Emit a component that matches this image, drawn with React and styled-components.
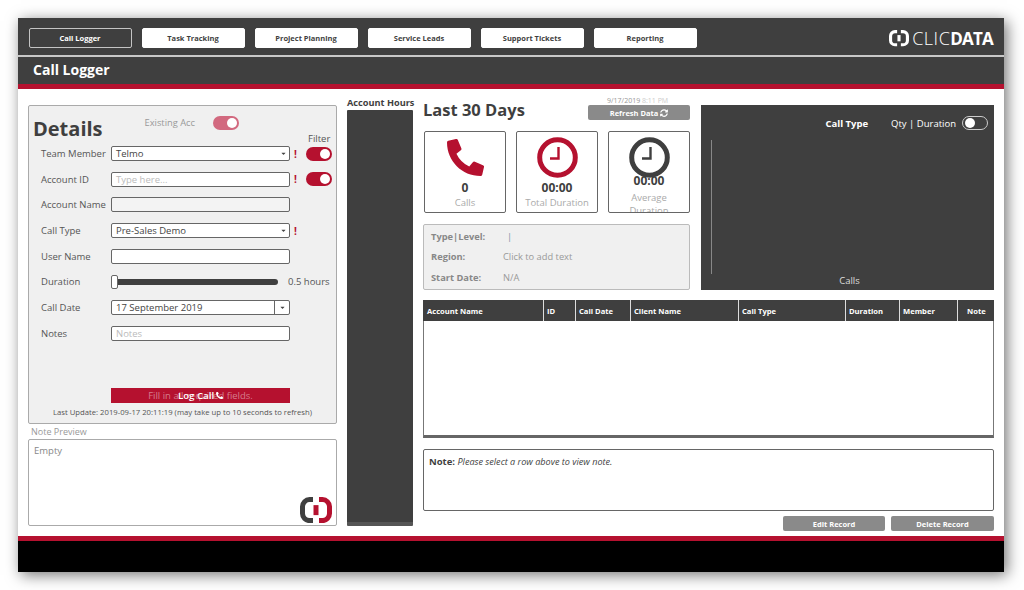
import React from 'react';
import styled, { createGlobalStyle } from 'styled-components';
import { FaPhoneAlt, FaSyncAlt, FaCaretDown } from 'react-icons/fa';

const dark = '#3f3f3f';
const red = '#b5112f';

const GlobalStyle = createGlobalStyle`
  html, body {
    margin: 0;
    background: #fff;
    font-family: "Open Sans", "Liberation Sans", sans-serif;
    color: ${dark};
  }
  * { box-sizing: border-box; }
`;

const Frame = styled.div`
  width: 986px;
  height: 554px;
  margin: 18px;
  display: flex;
  flex-direction: column;
  background: #fff;
  box-shadow: 3px 3px 14px rgba(0, 0, 0, 0.55);
`;

const TopNav = styled.div`
  height: 37px;
  flex: none;
  background: ${dark};
  display: flex;
  align-items: flex-start;
  gap: 10px;
  padding: 10px 11px 0 10.5px;
`;

const NavButton = styled.div`
  width: 103px;
  height: 20px;
  border-radius: 2px;
  font-size: 7.5px;
  font-weight: 700;
  display: flex;
  align-items: center;
  justify-content: center;
  background: ${(p) => (p.$active ? dark : '#fff')};
  color: ${(p) => (p.$active ? '#fff' : dark)};
  border: 1px solid ${(p) => (p.$active ? '#c4c4c4' : '#fff')};
`;

const Logo = styled.div`
  margin-left: auto;
  margin-top: 2px;
  display: flex;
  align-items: center;
  gap: 3px;
  color: #fff;
  font-size: 18px;
  line-height: 16px;
`;

const LogoThin = styled.span`
  font-weight: 300;
  letter-spacing: 0.5px;
`;

const LogoBold = styled.span`
  font-size: 17px;
  font-weight: 700;
  letter-spacing: -0.8px;
`;

const TitleBar = styled.div`
  height: 34px;
  flex: none;
  background: ${dark};
  border-top: 2px solid #c8c8c8;
  border-bottom: 5px solid ${red};
  padding: 0 0 2px 15px;
  display: flex;
  align-items: center;
  color: #fff;
  font-size: 14px;
  font-weight: 700;
`;

const Content = styled.div`
  flex: 1;
  display: flex;
  align-items: flex-start;
  gap: 10px;
  padding: 7px 10px 5px;
  min-height: 0;
`;

const LeftCol = styled.div`
  width: 309px;
  margin-top: 9px;
  display: flex;
  flex-direction: column;
`;

const DetailsPanel = styled.div`
  position: relative;
  height: 319px;
  background: #f0f0f0;
  border: 1px solid #aaa;
  border-radius: 2px;
  display: flex;
  flex-direction: column;
  padding: 0 4px 5px 12px;
`;

const DetailsHead = styled.div`
  height: 40px;
  margin-left: -8px;
  display: flex;
  align-items: flex-start;
`;

const DetailsTitle = styled.h2`
  margin: 9px 0 0;
  font-size: 20px;
  line-height: 27px;
  font-weight: 700;
  color: ${dark};
`;

const ExistingLabel = styled.span`
  margin: 10px 0 0 42px;
  font-size: 9.3px;
  line-height: 14px;
  color: #999;
`;

const FilterLabel = styled.span`
  position: absolute;
  left: 279px;
  top: 26px;
  font-size: 9.5px;
  line-height: 14px;
  color: #555;
`;

const Toggle = styled.div`
  width: 26px;
  height: 14px;
  flex: none;
  border-radius: 7px;
  padding: 2px;
  display: flex;
  justify-content: ${(p) => (p.$on ? 'flex-end' : 'flex-start')};
  background: ${(p) => p.$bg || red};
  border: ${(p) => (p.$outline ? '1px solid #ccc' : 'none')};
  align-items: center;
`;

const Knob = styled.div`
  width: 10px;
  height: 10px;
  border-radius: 50%;
  background: #fff;
`;

const ExistingToggle = styled(Toggle)`
  margin: 10px 0 0 18px;
`;

const Rows = styled.div`
  display: flex;
  flex-direction: column;
  gap: 10.7px;
`;

const Row = styled.div`
  height: 15px;
  display: flex;
  align-items: center;
`;

const RowLabel = styled.label`
  width: 70px;
  flex: none;
  font-size: 9.5px;
  color: #555;
`;

const Field = styled.div`
  width: 179px;
  height: 15px;
  flex: none;
  background: ${(p) => (p.$muted ? '#f3f3f3' : '#fff')};
  border: 1px solid #666;
  border-radius: 2px;
  display: flex;
  align-items: center;
  padding-left: 4px;
  font-size: 9.5px;
  color: ${(p) => (p.$placeholder ? '#bbb' : '#444')};
`;

const Caret = styled(FaCaretDown)`
  margin-left: auto;
  margin-right: 2px;
  width: 7px;
  height: 7px;
  color: #444;
`;

const DateCaret = styled.div`
  margin-left: auto;
  width: 15px;
  height: 100%;
  border-left: 1px solid #666;
  display: flex;
  align-items: center;
  justify-content: center;
  & > svg {
    margin: 0;
  }
`;

const Flag = styled.span`
  width: 16px;
  flex: none;
  padding-left: 4px;
  font-size: 10px;
  font-weight: 700;
  color: ${red};
`;

const Slider = styled.div`
  position: relative;
  width: 167px;
  height: 6px;
  flex: none;
  background: ${dark};
  border-radius: 3px;
`;

const SliderThumb = styled.div`
  position: absolute;
  left: 0;
  top: -4px;
  width: 7px;
  height: 14px;
  background: #fff;
  border: 1px solid #666;
  border-radius: 2px;
`;

const SliderValue = styled.span`
  margin-left: 10px;
  font-size: 9.5px;
  color: #555;
`;

const SubmitWrap = styled.div`
  position: relative;
  margin: auto 0 0 70px;
  width: 179px;
  height: 15px;
  background: ${red};
  display: flex;
  align-items: center;
  justify-content: center;
  gap: 2px;
  color: #fff;
  font-size: 9.7px;
  font-weight: 600;
`;

const SubmitHint = styled.span`
  position: absolute;
  inset: 0;
  display: flex;
  align-items: center;
  justify-content: center;
  font-size: 9.5px;
  font-weight: 400;
  color: rgba(255, 255, 255, 0.45);
`;

const LastUpdate = styled.div`
  margin: 3px 0 0 -12px;
  width: 307px;
  text-align: center;
  font-size: 7.7px;
  line-height: 12px;
  color: #555;
`;

const PreviewLabel = styled.div`
  margin: 1px 0 0 3px;
  height: 14px;
  font-size: 9px;
  line-height: 14px;
  color: #999;
`;

const PreviewBox = styled.div`
  position: relative;
  height: 87px;
  background: #fff;
  border: 1px solid #aaa;
  border-radius: 2px;
  padding: 4px 5px;
  font-size: 9.5px;
  color: #888;
`;

const PreviewLogo = styled.div`
  position: absolute;
  right: 4px;
  bottom: 2px;
  line-height: 0;
`;

const HoursCol = styled.div`
  width: 66px;
  display: flex;
  flex-direction: column;
`;

const HoursLabel = styled.div`
  height: 14px;
  white-space: nowrap;
  font-size: 9.2px;
  line-height: 14px;
  font-weight: 700;
  color: ${dark};
`;

const HoursBar = styled.div`
  height: 416px;
  background: ${dark};
  border-bottom: 4px solid #555;
  border-radius: 1px;
`;

const RightCol = styled.div`
  width: 571px;
  display: flex;
  flex-direction: column;
`;

const TopRow = styled.div`
  display: flex;
  gap: 11px;
  height: 194px;
`;

const Summary = styled.div`
  width: 267px;
  display: flex;
  flex-direction: column;
`;

const SummaryHead = styled.div`
  height: 35px;
  display: flex;
  justify-content: space-between;
`;

const SummaryTitle = styled.h2`
  margin: 2px 0 0;
  font-size: 16.5px;
  line-height: 23px;
  font-weight: 700;
  color: ${dark};
`;

const RefreshStack = styled.div`
  width: 102px;
  display: flex;
  flex-direction: column;
`;

const StampText = styled.div`
  height: 9px;
  padding-left: 19px;
  font-size: 7px;
  line-height: 9px;
  color: #999;
  white-space: nowrap;
`;

const StampTime = styled.span`
  color: #ccc;
`;

const GreyButton = styled.div`
  width: ${(p) => p.$width || '102px'};
  height: 15px;
  background: #8a8a8a;
  border-radius: 2px;
  display: flex;
  align-items: center;
  justify-content: center;
  gap: 2px;
  font-size: 7.5px;
  font-weight: 700;
  color: #fff;
`;

const Cards = styled.div`
  display: flex;
  justify-content: space-between;
  padding-left: 1px;
`;

const Card = styled.div`
  position: relative;
  width: 82px;
  height: 82px;
  background: #fff;
  border: 1px solid #666;
  border-radius: 2px;
  overflow: hidden;
  display: flex;
  flex-direction: column;
  align-items: center;
  padding-top: 5px;
`;

const CardIcon = styled.div`
  position: relative;
  z-index: 1;
  height: 41px;
  flex: none;
  display: flex;
  align-items: center;
  justify-content: center;
  line-height: 0;
  color: ${red};
`;

const CardValue = styled.div`
  margin: ${(p) => (p.$pull ? '-5px 0 2px' : '2px 0 0')};
  font-size: 12px;
  line-height: 15px;
  font-weight: 700;
  color: ${dark};
`;

const CardLabel = styled.div`
  margin-top: 1px;
  max-width: 70px;
  font-size: 9.5px;
  line-height: 13px;
  text-align: center;
  color: #aaa;
`;

const InfoBox = styled.div`
  height: 67px;
  margin-top: 11px;
  background: #f0f0f0;
  border: 1px solid #bbb;
  border-radius: 2px;
  padding: 3px 7px;
  display: flex;
  flex-direction: column;
  justify-content: space-between;
`;

const InfoRow = styled.div`
  display: flex;
  height: 18px;
  align-items: center;
  font-size: 9.3px;
  color: #999;
`;

const InfoKey = styled.span`
  width: 72px;
  font-weight: 700;
  color: #888;
`;

const InfoCursor = styled.span`
  margin-left: 4px;
  color: #7a8fa8;
`;

const ChartPanel = styled.div`
  width: 293px;
  height: 185px;
  margin-top: 9px;
  background: ${dark};
  display: flex;
  flex-direction: column;
  padding: 11px 6px 3px 10px;
  color: #fff;
`;

const ChartHead = styled.div`
  display: flex;
  align-items: center;
  justify-content: flex-end;
  font-size: 9.5px;
`;

const ChartTitle = styled.span`
  font-weight: 700;
  margin-right: 23px;
`;

const ChartToggle = styled(Toggle)`
  margin-left: 6px;
`;

const ChartPlot = styled.div`
  flex: 1;
  margin-top: 10px;
  border-left: 1px solid #888;
`;

const ChartAxisLabel = styled.div`
  text-align: center;
  font-size: 9.5px;
  line-height: 13px;
  color: #ddd;
`;

const TableWrap = styled.div`
  height: 138px;
  flex: none;
  margin-top: 10px;
  background: #fff;
  border: 1px solid #777;
  border-bottom: 3px solid #666;
  border-radius: 2px 2px 0 0;
`;

const TableHead = styled.div`
  height: 21px;
  background: ${dark};
  margin: -1px -1px 0;
  display: grid;
  grid-template-columns: 120px 32px 55px 108px 107px 54px 58px 37px;
`;

const HeadCell = styled.div`
  display: flex;
  align-items: center;
  padding-left: ${(p) => p.$pad || 3}px;
  font-size: 7.6px;
  font-weight: 700;
  color: #fff;
  border-left: ${(p) => (p.$first ? 'none' : '1px solid #ddd')};
`;

const NoteBox = styled.div`
  height: 62px;
  flex: none;
  margin-top: 11px;
  background: #fff;
  border: 1px solid #666;
  border-radius: 2px;
  padding: 5px;
  font-size: 9.1px;
  line-height: 13px;
  color: ${dark};
`;

const NoteKey = styled.b`
  font-size: 9.5px;
`;

const RecordActions = styled.div`
  margin-top: 5px;
  display: flex;
  justify-content: flex-end;
  gap: 6px;
`;

const Footer = styled.div`
  height: 36px;
  flex: none;
  background: #000;
  border-top: 5px solid ${red};
`;

const BracketMark = ({ size, left, right, middle }) => (
  <svg width={size} height={size * 0.82} viewBox="0 0 32 26" fill="none" strokeWidth="5">
    <path d="M13 2.5H9.5A7 7 0 0 0 2.5 9.5V16.5A7 7 0 0 0 9.5 23.5H13" stroke={left} />
    <path d="M19 2.5H22.5A7 7 0 0 1 29.5 9.5V16.5A7 7 0 0 1 22.5 23.5H19" stroke={right} />
    <path d="M16 8V18" stroke={middle} />
  </svg>
);

const ClockIcon = ({ color }) => (
  <svg width="41" height="41" viewBox="0 0 41 41" fill="none">
    <circle cx="20.5" cy="20.5" r="17.8" fill="#fff" stroke={color} strokeWidth="5" />
    <path d="M21.5 10V21.5H13" stroke={color} strokeWidth="2.4" />
  </svg>
);

const navItems = ['Call Logger', 'Task Tracking', 'Project Planning', 'Service Leads', 'Support Tickets', 'Reporting'];

const columns = ['Account Name', 'ID', 'Call Date', 'Client Name', 'Call Type', 'Duration', 'Member', 'Note'];

const App = () => {
  return (
    <Frame>
      <GlobalStyle />
      <TopNav>
        {navItems.map((item, index) => (
          <NavButton key={item} $active={index === 0}>{item}</NavButton>
        ))}
        <Logo>
          <BracketMark size={20} left="#fff" right="#fff" middle="#fff" />
          <span><LogoThin>CLIC</LogoThin><LogoBold>DATA</LogoBold></span>
        </Logo>
      </TopNav>
      <TitleBar>Call Logger</TitleBar>

      <Content>
        <LeftCol>
          <DetailsPanel>
            <DetailsHead>
              <DetailsTitle>Details</DetailsTitle>
              <ExistingLabel>Existing Acc</ExistingLabel>
              <ExistingToggle $on $bg="#d2697f"><Knob /></ExistingToggle>
            </DetailsHead>
            <FilterLabel>Filter</FilterLabel>
            <Rows>
              <Row>
                <RowLabel>Team Member</RowLabel>
                <Field>Telmo<Caret /></Field>
                <Flag>!</Flag>
                <Toggle $on><Knob /></Toggle>
              </Row>
              <Row>
                <RowLabel>Account ID</RowLabel>
                <Field $placeholder>Type here...</Field>
                <Flag>!</Flag>
                <Toggle $on><Knob /></Toggle>
              </Row>
              <Row>
                <RowLabel>Account Name</RowLabel>
                <Field $muted />
              </Row>
              <Row>
                <RowLabel>Call Type</RowLabel>
                <Field>Pre-Sales Demo<Caret /></Field>
                <Flag>!</Flag>
              </Row>
              <Row>
                <RowLabel>User Name</RowLabel>
                <Field />
              </Row>
              <Row>
                <RowLabel>Duration</RowLabel>
                <Slider><SliderThumb /></Slider>
                <SliderValue>0.5 hours</SliderValue>
              </Row>
              <Row>
                <RowLabel>Call Date</RowLabel>
                <Field>17 September 2019<DateCaret><Caret /></DateCaret></Field>
              </Row>
              <Row>
                <RowLabel>Notes</RowLabel>
                <Field $placeholder>Notes</Field>
              </Row>
            </Rows>
            <SubmitWrap>
              <SubmitHint>Fill in all required fields.</SubmitHint>
              Log Call <FaPhoneAlt size={7} />
            </SubmitWrap>
            <LastUpdate>Last Update: 2019-09-17 20:11:19 (may take up to 10 seconds to refresh)</LastUpdate>
          </DetailsPanel>
          <PreviewLabel>Note Preview</PreviewLabel>
          <PreviewBox>
            Empty
            <PreviewLogo>
              <BracketMark size={32} left={dark} right={red} middle={red} />
            </PreviewLogo>
          </PreviewBox>
        </LeftCol>

        <HoursCol>
          <HoursLabel>Account Hours</HoursLabel>
          <HoursBar />
        </HoursCol>

        <RightCol>
          <TopRow>
            <Summary>
              <SummaryHead>
                <SummaryTitle>Last 30 Days</SummaryTitle>
                <RefreshStack>
                  <StampText>9/17/2019 <StampTime>8:11 PM</StampTime></StampText>
                  <GreyButton>Refresh Data <FaSyncAlt size={8} /></GreyButton>
                </RefreshStack>
              </SummaryHead>
              <Cards>
                <Card>
                  <CardIcon><FaPhoneAlt size={37} /></CardIcon>
                  <CardValue>0</CardValue>
                  <CardLabel>Calls</CardLabel>
                </Card>
                <Card>
                  <CardIcon><ClockIcon color={red} /></CardIcon>
                  <CardValue>00:00</CardValue>
                  <CardLabel>Total Duration</CardLabel>
                </Card>
                <Card>
                  <CardIcon><ClockIcon color={dark} /></CardIcon>
                  <CardValue $pull>00:00</CardValue>
                  <CardLabel>Average Duration</CardLabel>
                </Card>
              </Cards>
              <InfoBox>
                <InfoRow><InfoKey>Type|Level:</InfoKey><InfoCursor>|</InfoCursor></InfoRow>
                <InfoRow><InfoKey>Region:</InfoKey>Click to add text</InfoRow>
                <InfoRow><InfoKey>Start Date:</InfoKey>N/A</InfoRow>
              </InfoBox>
            </Summary>
            <ChartPanel>
              <ChartHead>
                <ChartTitle>Call Type</ChartTitle>
                <span>Qty | Duration</span>
                <ChartToggle $bg={dark} $outline><Knob /></ChartToggle>
              </ChartHead>
              <ChartPlot />
              <ChartAxisLabel>Calls</ChartAxisLabel>
            </ChartPanel>
          </TopRow>

          <TableWrap>
            <TableHead>
              {columns.map((col, index) => (
                <HeadCell key={col} $first={index === 0} $pad={index === 0 ? 4 : col === 'Note' ? 9 : 3}>{col}</HeadCell>
              ))}
            </TableHead>
          </TableWrap>

          <NoteBox>
            <NoteKey>Note:</NoteKey> <i>Please select a row above to view note.</i>
          </NoteBox>

          <RecordActions>
            <GreyButton>Edit Record</GreyButton>
            <GreyButton $width="103px">Delete Record</GreyButton>
          </RecordActions>
        </RightCol>
      </Content>

      <Footer />
    </Frame>
  );
};

export default App;
